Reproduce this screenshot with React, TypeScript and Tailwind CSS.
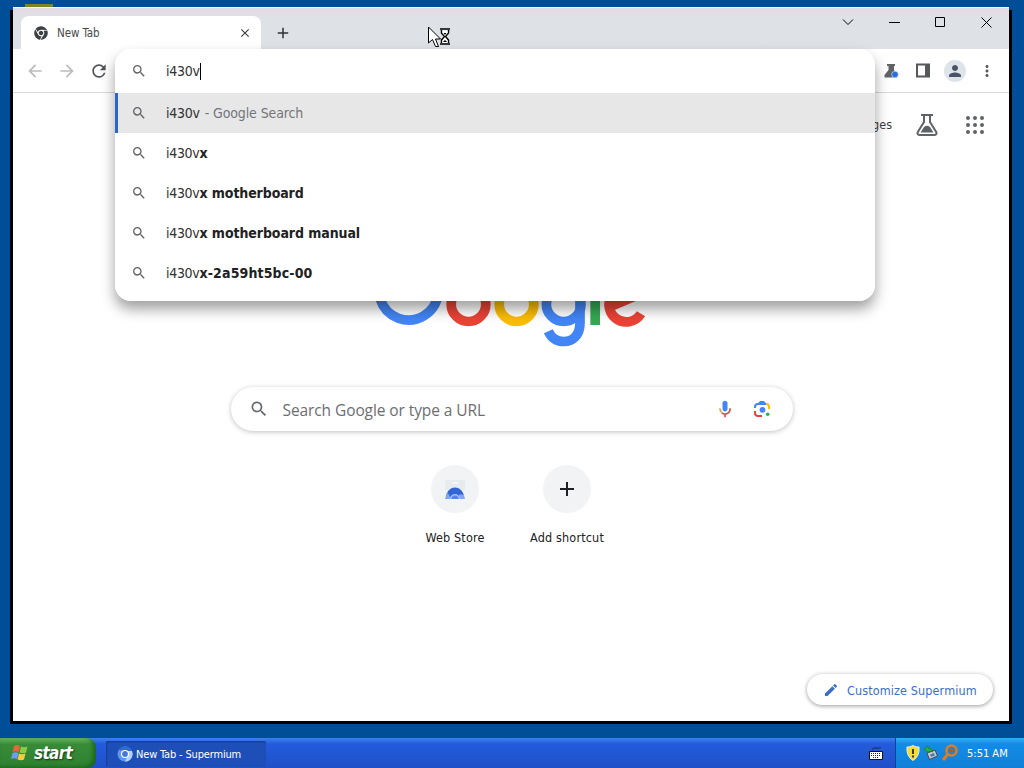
import React from 'react';
import { FaChrome } from 'react-icons/fa';
import {
  MdAdd,
  MdArrowBack,
  MdArrowForward,
  MdClose,
  MdEdit,
  MdMoreVert,
  MdPerson,
  MdRefresh,
  MdSearch,
} from 'react-icons/md';

interface Suggestion {
  typed: string;
  rest: string;
  tracking: string;
}

const suggestions: Suggestion[] = [
  { typed: 'i430v', rest: 'x', tracking: 'tracking-normal' },
  { typed: 'i430v', rest: 'x motherboard', tracking: 'tracking-[-0.1px]' },
  { typed: 'i430v', rest: 'x motherboard manual', tracking: 'tracking-[-0.08px]' },
  { typed: 'i430v', rest: 'x-2a59ht5bc-00', tracking: 'tracking-[0.13px]' },
];

const appDots = [2, 9, 16];

function TitleBar() {
  return (
    <div className="flex h-[42px] shrink-0 border-t border-[#f4f6fa] bg-linear-to-b from-[#e4dce3] from-10% to-[#dee1e6] to-20% pl-2">
      <div className="mt-2 flex h-[33px] w-[240px] items-center rounded-t-lg bg-white pl-[13px] pr-[9px]">
        <FaChrome className="size-[14px] text-[#3c4043]" />
        <span className="ml-[9px] mt-[2px] flex-1 text-[11.5px] tracking-[-0.1px] text-[#45494d]">New Tab</span>
        <MdClose className="size-[14px] text-[#3c4043]" />
      </div>
      <MdAdd className="ml-[13px] mt-4 size-[18px] text-[#303336]" />
      <div className="ml-auto flex h-7 items-center text-black">
        <svg className="mr-[35px] size-3" viewBox="0 0 12 12" fill="none" stroke="currentColor">
          <path d="M1 3.5l5 5 5-5" />
        </svg>
        <svg className="mr-[35px] h-3 w-[11px]" viewBox="0 0 11 12" stroke="currentColor">
          <path d="M0 6.5h11" />
        </svg>
        <svg className="mr-[35px] size-[11px]" viewBox="0 0 11 11" fill="none" stroke="currentColor">
          <path d="M.5.5h9v9h-9z" />
        </svg>
        <svg className="mr-[17px] size-[11px]" viewBox="0 0 11 11" stroke="currentColor">
          <path d="M.5.5l10 10M10.5.5l-10 10" />
        </svg>
      </div>
    </div>
  );
}

function Toolbar() {
  return (
    <div className="flex h-[44px] shrink-0 items-center border-b border-[#d7dadd] bg-white pl-3">
      <MdArrowBack className="size-5 text-[#babcbe]" />
      <MdArrowForward className="ml-3 size-5 text-[#babcbe]" />
      <MdRefresh className="ml-3 size-5 text-[#515558]" />
      <div className="ml-auto flex items-center pr-[13px]">
        <svg className="size-4" viewBox="0 0 16 16">
          <path d="M4 1h8v2h-1v4l3 5v2.5H1.5V12l4-5V3H4z" fill="#5f6368" />
          <circle cx="12" cy="11.5" r="3.3" fill="#2a6fdc" stroke="#fff" strokeWidth=".5" />
        </svg>
        <svg className="ml-[17px] h-[15px] w-[14px]" viewBox="0 0 14 15">
          <path d="M0 .5h14v14H0zM2 2.5v10h7v-10z" fill="#55595c" fillRule="evenodd" />
        </svg>
        <div className="ml-[14px] flex size-[22px] items-center justify-center rounded-full bg-[#dfe3ea]">
          <MdPerson className="size-[18px] text-[#4a5568]" />
        </div>
        <MdMoreVert className="ml-3 size-[18px] text-[#55595c]" />
      </div>
    </div>
  );
}

function GoogleLogo() {
  return (
    <svg className="h-[92px] w-[272px]" viewBox="0 0 272 92" fill="none" strokeWidth="9.7">
      <path d="M55.5 13.5A29.6 29.6 0 1 0 63 36.7H35.3" stroke="#4285f4" />
      <circle cx="93.5" cy="47.2" r="17.3" stroke="#ea4335" />
      <circle cx="141.5" cy="47.2" r="17.3" stroke="#fbbc05" />
      <circle cx="188.7" cy="47.2" r="17.3" stroke="#4285f4" />
      <path d="M205 26.3V66c0 12-7 18.5-16.3 18.5-7 0-12.5-4-15.4-10.3" stroke="#4285f4" />
      <path d="M220.2 3v65" stroke="#34a853" />
      <path d="M266 56.8A17.3 17.3 0 1 1 265 37l-29 12.2" stroke="#ea4335" />
    </svg>
  );
}

function SearchBox() {
  return (
    <div className="flex h-[44px] w-[562px] items-center rounded-full bg-white pl-[18px] pr-[22px] shadow-[0_1px_5px_rgba(32,33,36,0.28)]">
      <MdSearch className="size-5 text-[#65696d]" />
      <span className="ml-[14px] mt-[3px] flex-1 font-['Open_Sans',sans-serif] text-[15.5px] tracking-[-0.09px] text-[#6b6e71] [font-stretch:normal]">
        Search Google or type a URL
      </span>
      <svg className="mr-px size-5" viewBox="0 0 24 24">
        <path d="M12 15c1.7 0 3-1.3 3-3V5c0-1.7-1.3-3-3-3S9 3.3 9 5v7c0 1.7 1.3 3 3 3z" fill="#4285f4" />
        <path d="M11 18h2v4h-2z" fill="#d5523f" />
        <path d="M5 11h2c0 1.5.6 2.8 1.5 3.7L7 16.2A7 7 0 0 1 5 11z" fill="#e2a13a" />
        <path d="M12 17c-1.3 0-2.6-.6-3.5-1.5l-1.4 1.4A7 7 0 0 0 19 11h-2a5 5 0 0 1-5 6z" fill="#d5523f" />
      </svg>
      <svg className="ml-[17px] size-[18px]" viewBox="0 0 18 18" fill="none" strokeWidth="2">
        <path d="M2 8V7a3 3 0 0 1 3-3h8" stroke="#4285f4" />
        <path d="M13 4a3 3 0 0 1 3 3v2" stroke="#fbbc05" />
        <path d="M2 11v2a3 3 0 0 0 3 3h4" stroke="#ea4335" />
        <path d="M5 3.5L7 1h4l2 2.5z" fill="#4285f4" />
        <circle cx="9.5" cy="9.8" r="2.9" fill="#4285f4" />
        <circle cx="14.7" cy="14.3" r="1.8" fill="#34a853" />
      </svg>
    </div>
  );
}

function Shortcuts() {
  return (
    <div className="mt-[34px] flex text-[12.5px] text-[#202124]">
      <div className="flex w-28 flex-col items-center">
        <div className="flex size-12 items-center justify-center rounded-full bg-[#f1f3f4]">
          <svg className="size-6" viewBox="0 0 24 24">
            <path d="M2 3h20v10H2z" fill="#e8ebed" />
            <path d="M9 6h6" stroke="#fff" />
            <path d="M2.5 22a9.5 11.5 0 0 1 19 0z" fill="#3267d3" />
            <path d="M2.5 22c.2-3 1-5 2-6.5l4 6.5zM16 17.5h4.8q.7 2 .7 4.5h-6z" fill="#7da7ef" />
            <path d="M7 22a5 5 0 0 1 10 0z" fill="#a3c2f5" />
            <path d="M8.5 22a3.5 3.5 0 0 1 7 0z" fill="#4f86e8" />
          </svg>
        </div>
        <span className="mt-4 tracking-[0.15px]">Web Store</span>
      </div>
      <div className="flex w-28 flex-col items-center">
        <div className="flex size-12 items-center justify-center rounded-full bg-[#f1f3f4]">
          <MdAdd className="size-6 text-[#202124]" />
        </div>
        <span className="mt-4 whitespace-nowrap tracking-[0.17px]">Add shortcut</span>
      </div>
    </div>
  );
}

function NewTabPage() {
  return (
    <div className="relative flex flex-1 flex-col items-center bg-white">
      <div className="flex h-[64px] w-full items-center justify-end pr-[25px]">
        <span className="mr-[24px] text-[12.5px] text-[#3c4043]">Images</span>
        <svg className="mr-7 h-[22px] w-[22px]" viewBox="0 0 22 22" fill="none" stroke="#5f6368" strokeWidth="2">
          <path d="M5 1h12M8 1v7L1.8 18c-.8 1.5 0 3 1.5 3h15.4c1.5 0 2.3-1.5 1.5-3L14 8V1" />
          <path d="M4.5 18.5L8 13q3-2.5 6 0l3.5 5.5z" fill="#5f6368" stroke="none" />
        </svg>
        <svg className="size-[18px]" viewBox="0 0 18 18" fill="#5f6368">
          {appDots.map((y) => appDots.map((x) => <circle key={`${x}-${y}`} cx={x} cy={y} r="2" />))}
        </svg>
      </div>
      <div className="mt-[100px]">
        <GoogleLogo />
      </div>
      <div className="mt-[38px] ml-px">
        <SearchBox />
      </div>
      <Shortcuts />
      <button className="absolute bottom-4 right-4 flex h-[31px] w-[186px] items-center rounded-full bg-white pl-4 text-[#3a6fc4] shadow-[0_1px_4px_rgba(0,0,0,0.4)]">
        <MdEdit className="size-4" />
        <span className="ml-2 mt-[3px] whitespace-nowrap text-[12.5px] tracking-[0.12px]">Customize Supermium</span>
      </button>
    </div>
  );
}

function OmniboxPopup() {
  return (
    <div className="absolute left-[102px] top-[42px] h-[252px] w-[760px] overflow-hidden rounded-2xl bg-white text-[14px] text-[#303134]">
      <div className="flex h-[44px] items-center pl-4">
        <MdSearch className="size-4 text-[#5f6368]" />
        <span className="ml-[19px] tracking-[-0.25px]">i430v</span>
        <span className="h-[17px] w-px bg-black" />
      </div>
      <div className="flex h-10 items-center border-l-[3px] border-[#2a67c9] bg-[#e7e7e8] pl-[13px]">
        <MdSearch className="size-4 text-[#5f6368]" />
        <span className="ml-[19px] tracking-[-0.25px]">i430v</span>
        <span className="ml-[5px] tracking-[-0.12px] text-[#737578]">- Google Search</span>
      </div>
      {suggestions.map((item) => (
        <div key={item.rest} className="flex h-10 items-center pl-4">
          <MdSearch className="size-4 text-[#5f6368]" />
          <span className="ml-[19px] whitespace-pre tracking-[-0.3px]">
            {item.typed}
            <b className={`text-[#202124] ${item.tracking}`}>{item.rest}</b>
          </span>
        </div>
      ))}
    </div>
  );
}

function BusyCursor() {
  return (
    <svg className="absolute left-[427px] top-[26px] h-[24px] w-[26px]" viewBox="0 0 26 24">
      <path d="M1.5 1v16l4-3.5 3 7h3l-3-7.5h5z" fill="#fff" stroke="#000" />
      <path d="M13 3h10M13 18h10M14.5 4v3l3 3.5-3 3.5v3M21.5 4v3l-3 3.5 3 3.5v3" fill="none" stroke="#000" strokeWidth="1.5" />
      <path d="M15.5 4.5h5V7L18 10l-2.5-3zM15.5 17v-2.5L18 11l2.5 3.5V17z" fill="#fff" />
      <path d="M16.5 7h3L18 9zM16 16l2-2 2 2z" fill="#000" />
    </svg>
  );
}

function Taskbar() {
  return (
    <div className="flex h-[30px] w-full bg-linear-to-b from-[#3d80f2] via-[#245bdb] via-20% to-[#1f50c8] text-white">
      <div className="flex w-24 items-center rounded-r-[9px] bg-linear-to-b from-[#6dbb6a] via-[#388c38] via-20% to-[#2e822f] pl-[11px] shadow-[inset_-3px_-1px_4px_rgba(0,70,0,0.5)]">
        <svg className="size-[18px]" viewBox="0 0 18 18">
          <path d="M3 2q3-2 6 0L7.5 8q-3-1.500-6 0z" fill="#e8663c" />
          <path d="M10 2.5q3 1.500 6.500 0L15 8.500q-3 1.500-6.500 0z" fill="#8bcb45" />
          <path d="M1.5 9q3-1.500 6 0L6 15q-3-1.500-6 0z" fill="#6f9bf0" />
          <path d="M8 9.5q3 1.500 6.500 0L13 15.500q-3 1.500-6.500 0z" fill="#f6cb3c" />
        </svg>
        <span className="ml-[5px] mt-px text-[17px] font-bold italic tracking-[-0.7px] [text-shadow:1px_1px_2px_rgba(0,0,0,0.6)]">
          start
        </span>
      </div>
      <div className="ml-[10px] mt-[3px] flex h-[26px] w-[160px] items-center rounded-xs bg-[#1e4fb8] pl-[11px] shadow-[inset_1px_1px_2px_#173c91]">
        <svg className="size-4" viewBox="0 0 16 16">
          <circle cx="8" cy="8" r="7.5" fill="#5e96ec" />
          <path d="M1.5 4A7.5 7.5 0 0 1 15 5H8z" fill="#2f69d2" />
          <path d="M15 5a7.5 7.5 0 0 1-7 10.5L11 9 10 5z" fill="#b5d2fa" />
          <circle cx="8" cy="8" r="3.5" fill="#3f7be0" stroke="#fff" strokeWidth="1.2" />
        </svg>
        <span className="ml-[3px] mt-[2px] whitespace-nowrap text-[11px] tracking-[-0.17px]">New Tab - Supermium</span>
      </div>
      <svg className="ml-auto mr-[12px] mt-[9px] h-[13px] w-[14px]" viewBox="0 0 14 13">
        <path d="M3 3q1-3 4-2t5-1" fill="none" stroke="#142a66" />
        <path d="M.5 4.5h13v8H.5z" fill="#fff" stroke="#111" />
        <path d="M2 6.5h10M2 8.5h10M4 10.5h6" stroke="#222" strokeDasharray="1 1" />
      </svg>
      <div className="flex w-[129px] items-center border-l border-[#143f9c] bg-linear-to-b from-[#2eb3f5] via-[#128ce6] via-20% to-[#1280d8] pl-[9px]">
        <svg className="size-4" viewBox="0 0 16 16">
          <path d="M8 .5q3 2 6 1.500 1 9-6 13.500Q1 11 2 2q3 .5 6-1.500z" fill="#f6dc32" stroke="#e8eef4" />
          <path d="M8 4v5M8 10.5v2" stroke="#222" strokeWidth="1.7" />
        </svg>
        <svg className="ml-[2px] size-4" viewBox="0 0 16 16">
          <path d="M4 8l8-3 2.5 6-8 3.5z" fill="#c8cdd2" stroke="#40474f" />
          <path d="M7 9.5L11 8l1 2.5L8 12z" fill="#497cae" />
          <path d="M1 4l4-3v2q4 0 5 4L6 6v2z" fill="#2eae45" stroke="#14702a" strokeWidth=".6" />
        </svg>
        <svg className="ml-[2px] size-[18px]" viewBox="0 0 18 18" fill="none" stroke="#df7b20">
          <circle cx="10.5" cy="6.5" r="5" strokeWidth="2.5" />
          <path d="M7 10l-5 6" strokeWidth="3" />
          <path d="M10.5 4v5M8 6.5h5" stroke="#b35d16" />
        </svg>
        <span className="ml-2 mt-[2px] whitespace-nowrap text-[11px]">5:51 AM</span>
      </div>
    </div>
  );
}

export default function App() {
  return (
    <div className="relative flex h-[768px] w-[1024px] flex-col overflow-hidden bg-[#004e98] font-['DejaVu_Sans_Condensed','DejaVu_Sans',sans-serif] [font-stretch:condensed]">
      <div className="ml-[25px] mt-1 h-[3px] w-7 shrink-0 bg-[#7c8528]" />
      <div className="relative ml-[13px] flex h-[714px] w-[996px] shrink-0 flex-col shadow-[3px_3px_0_#000,-3px_3px_0_#000]">
        <TitleBar />
        <Toolbar />
        <NewTabPage />
        <div className="absolute left-[102px] top-[42px] h-[252px] w-[760px] rounded-2xl shadow-[0_8px_14px_rgba(0,0,0,0.38)]" />
        <OmniboxPopup />
      </div>
      <div className="mt-auto">
        <Taskbar />
      </div>
      <BusyCursor />
    </div>
  );
}
